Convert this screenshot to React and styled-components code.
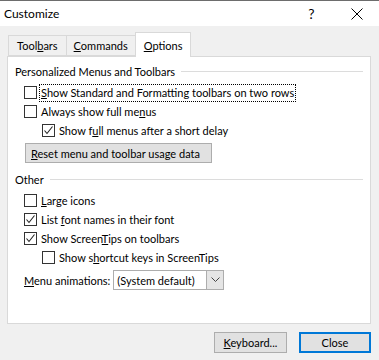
import React from 'react'
import styled, { createGlobalStyle } from 'styled-components'

const Global = createGlobalStyle`
  html, body {
    margin: 0;
    padding: 0;
    background: #f0f0f0;
  }
  body {
    font-family: Lato, 'Noto Sans', sans-serif;
    font-size: 11px;
    color: #000;
  }
`

const Window = styled.div`
  width: 379px;
  height: 360px;
  box-sizing: border-box;
  border-top: 1px solid #6d6d6d;
  background: #f0f0f0;
  display: flex;
  flex-direction: column;
  white-space: nowrap;
`

const TitleBar = styled.div`
  height: 25px;
  background: #fff;
  display: flex;
  align-items: center;
  padding-left: 4px;
`

const Title = styled.div`
  flex: 1;
  font-size: 12px;
`

const TitleButton = styled.div`
  width: 45px;
  height: 25px;
  display: flex;
  align-items: center;
  justify-content: center;
  font-size: 14px;
`

const Body = styled.div`
  padding: 6px 8px 0 7px;
  display: flex;
  flex-direction: column;
`

const Tabs = styled.div`
  display: flex;
  align-items: flex-end;
  height: 24px;
  padding-left: 1px;
  position: relative;
  z-index: 1;
`

const Tab = styled.div`
  box-sizing: border-box;
  height: ${p => (p.$active ? '25px' : '21px')};
  margin-bottom: ${p => (p.$active ? '-1px' : '0')};
  padding: 0 ${p => p.$pad}px;
  display: flex;
  align-items: center;
  background: ${p => (p.$active ? '#fff' : '#f0f0f0')};
  border: 1px solid #d9d9d9;
  border-bottom: ${p => (p.$active ? 'none' : '1px solid #d9d9d9')};
  margin-left: ${p => (p.$first ? '0' : '-1px')};
`

const Panel = styled.div`
  box-sizing: border-box;
  height: 268px;
  background: #fff;
  border: 1px solid #d9d9d9;
  padding: 6px 7px 0 7px;
  display: flex;
  flex-direction: column;
`

const Group = styled.div`
  display: flex;
  align-items: center;
  height: 16px;
  margin-top: ${p => p.$top || 0}px;
  margin-bottom: 4px;
  gap: 6px;
  &::after {
    content: '';
    flex: 1;
    height: 1px;
    background: #dcdcdc;
  }
`

const Row = styled.label`
  display: flex;
  align-items: center;
  height: 19px;
  padding-left: ${p => 9 + (p.$indent || 0)}px;
  gap: 3px;
`

const Box = styled.span`
  box-sizing: border-box;
  width: 13px;
  height: 13px;
  border: 1px solid #333;
  background: #fff;
  display: flex;
  align-items: center;
  justify-content: center;
`

const Label = styled.span`
  padding: 0 1px;
  line-height: 16px;
  outline: ${p => (p.$focus ? '1px dotted #000' : 'none')};
`

const Button = styled.div`
  box-sizing: border-box;
  height: ${p => p.$h || 20}px;
  width: ${p => (p.$w ? p.$w + 'px' : 'auto')};
  padding: 0 5px;
  display: flex;
  align-items: center;
  justify-content: ${p => (p.$center ? 'center' : 'flex-start')};
  background: #e1e1e1;
  border: ${p => (p.$default ? '2px solid #0078d7' : '1px solid #adadad')};
  align-self: flex-start;
`

const ResetButton = styled(Button)`
  margin: 3px 0 0 10px;
  width: 187px;
`

const SelectRow = styled.div`
  display: flex;
  align-items: center;
  margin-top: 3px;
  padding-left: 9px;
  gap: 3px;
`

const Select = styled.div`
  box-sizing: border-box;
  width: 111px;
  height: 20px;
  border: 1px solid #adadad;
  display: flex;
  align-items: center;
  background: #fff;
`

const SelectText = styled.span`
  flex: 1;
  padding-left: 3px;
`

const SelectArrow = styled.span`
  box-sizing: border-box;
  width: 17px;
  height: 18px;
  border-left: 1px solid #adadad;
  background: #e5e5e5;
  display: flex;
  align-items: center;
  justify-content: center;
`

const Footer = styled.div`
  display: flex;
  justify-content: flex-end;
  gap: 12px;
  padding-top: 8px;
`

const Check = () => (
  <svg width="11" height="11" viewBox="0 0 11 11">
    <path d="M1.5 5.5 L4 8.5 L9.5 1.5" fill="none" stroke="#222" strokeWidth="1.1" />
  </svg>
)

const CheckRow = ({ checked, indent, focus, children }) => (
  <Row $indent={indent}>
    <Box>{checked && <Check />}</Box>
    <Label $focus={focus}>{children}</Label>
  </Row>
)

const App = () => (
  <Window>
    <Global />
    <TitleBar>
      <Title>Customize</Title>
      <TitleButton>?</TitleButton>
      <TitleButton>
        <svg width="12" height="12" viewBox="0 0 12 12">
          <path d="M0.5 0.5 L11.5 11.5 M11.5 0.5 L0.5 11.5" stroke="#000" strokeWidth="1" />
        </svg>
      </TitleButton>
    </TitleBar>
    <Body>
      <Tabs>
        <Tab $first $pad={8}>
          <span>Tool<u>b</u>ars</span>
        </Tab>
        <Tab $pad={7}>
          <span><u>C</u>ommands</span>
        </Tab>
        <Tab $active $pad={8}>
          <span><u>O</u>ptions</span>
        </Tab>
      </Tabs>
      <Panel>
        <Group>Personalized Menus and Toolbars</Group>
        <CheckRow focus>
          <u>S</u>how Standard and Formatting toolbars on two rows
        </CheckRow>
        <CheckRow>
          Always show full me<u>n</u>us
        </CheckRow>
        <CheckRow checked indent={18}>
          Show f<u>u</u>ll menus after a short delay
        </CheckRow>
        <ResetButton>
          <span><u>R</u>eset menu and toolbar usage data</span>
        </ResetButton>
        <Group $top={8}>Other</Group>
        <CheckRow>
          <u>L</u>arge icons
        </CheckRow>
        <CheckRow checked>
          List <u>f</u>ont names in their font
        </CheckRow>
        <CheckRow checked>
          Show Screen<u>T</u>ips on toolbars
        </CheckRow>
        <CheckRow indent={18}>
          Show s<u>h</u>ortcut keys in ScreenTips
        </CheckRow>
        <SelectRow>
          <span>
            <u>M</u>enu animations:
          </span>
          <Select>
            <SelectText>(System default)</SelectText>
            <SelectArrow>
              <svg width="9" height="6" viewBox="0 0 9 6">
                <path d="M0.5 0.5 L4.5 4.5 L8.5 0.5" fill="none" stroke="#444" strokeWidth="1" />
              </svg>
            </SelectArrow>
          </Select>
        </SelectRow>
      </Panel>
      <Footer>
        <Button $w={73} $h={21} $center>
          <span><u>K</u>eyboard...</span>
        </Button>
        <Button $w={72} $h={21} $center $default>
          <span>Close</span>
        </Button>
      </Footer>
    </Body>
  </Window>
)

export default App
